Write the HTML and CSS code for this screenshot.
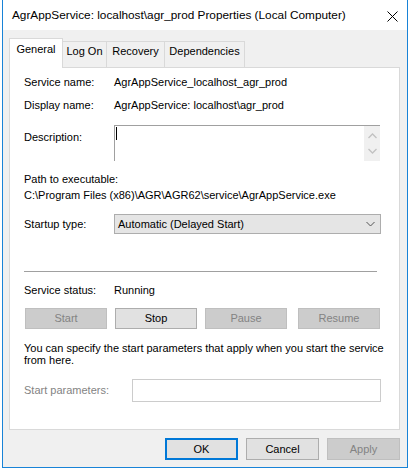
FILE: index.html
```html
<!DOCTYPE html>
<html>
<head>
<meta charset="utf-8">
<link rel="stylesheet" href="styles.css">
</head>
<body>
<div class="window">
  <div class="titlebar">
    <span class="title">AgrAppService: localhost\agr_prod Properties (Local Computer)</span>
    <svg class="close" width="11" height="11" viewBox="0 0 11 11"><path d="M0.5 0.5 L10.5 10.5 M10.5 0.5 L0.5 10.5" stroke="#000" stroke-width="1" fill="none"/></svg>
  </div>
  <div class="client">
    <div class="tabs">
      <div class="tab selected">General</div>
      <div class="tab t-logon">Log On</div>
      <div class="tab t-recovery">Recovery</div>
      <div class="tab t-deps">Dependencies</div>
    </div>
    <div class="panel">
      <div class="row r1"><span class="label">Service name:</span><span>AgrAppService_localhost_agr_prod</span></div>
      <div class="row r2"><span class="label">Display name:</span><span>AgrAppService: localhost\agr_prod</span></div>
      <div class="desc-row">
        <span class="label desc-label">Description:</span>
        <div class="desc-box">
          <div class="caret"></div>
          <div class="scroll">
            <svg width="9" height="6" viewBox="0 0 9 6"><polyline points="0.5,5 4.5,1 8.5,5" stroke="#c2c2c2" stroke-width="1.3" fill="none"/></svg>
            <svg width="9" height="6" viewBox="0 0 9 6"><polyline points="0.5,1 4.5,5 8.5,1" stroke="#c2c2c2" stroke-width="1.3" fill="none"/></svg>
          </div>
        </div>
      </div>
      <div class="path">
        <div>Path to executable:</div>
        <div>C:\Program Files (x86)\AGR\AGR62\service\AgrAppService.exe</div>
      </div>
      <div class="row startup"><span class="label">Startup type:</span>
        <div class="combo"><span>Automatic (Delayed Start)</span>
          <svg width="9" height="6" viewBox="0 0 9 6"><polyline points="0.5,1 4.5,5 8.5,1" stroke="#555" stroke-width="1" fill="none"/></svg>
        </div>
      </div>
      <div class="sep"></div>
      <div class="row status"><span class="label">Service status:</span><span>Running</span></div>
      <div class="btnrow">
        <div class="btn disabled b-start">Start</div>
        <div class="btn b-stop">Stop</div>
        <div class="btn disabled b-pause">Pause</div>
        <div class="btn disabled b-resume">Resume</div>
      </div>
      <div class="info">You can specify the start parameters that apply when you start the service<br>from here.</div>
      <div class="row params"><span class="label plabel">Start parameters:</span><div class="pinput"></div></div>
    </div>
    <div class="footer">
      <div class="btn fbtn ok">OK</div>
      <div class="btn fbtn">Cancel</div>
      <div class="btn fbtn disabled">Apply</div>
    </div>
  </div>
</div>
</body>
</html>
```

FILE: styles.css
```css
html, body {
  margin: 0;
  padding: 0;
  background: #ffffff;
}
body {
  font-family: "Liberation Sans", Arial, sans-serif;
  font-size: 11px;
  color: #000;
  width: 409px;
  height: 470px;
  overflow: hidden;
}
.window {
  margin-left: 2px;
  width: 406px;
  height: 468px;
  box-sizing: border-box;
  border: 1px solid #1883d7;
  border-top: none;
  display: flex;
  flex-direction: column;
}
.titlebar {
  height: 30px;
  flex: none;
  background: #fff;
  display: flex;
  align-items: center;
  padding-left: 9px;
  padding-right: 9px;
}
.title {
  font-size: 11.8px;
  flex: 1;
  white-space: nowrap;
}
.close {
  display: block;
  margin-top: 2px;
}
.client {
  flex: 1;
  background: #f0f0f0;
  padding-left: 6px;
}
.tabs {
  margin-top: 8px;
  height: 29px;
  display: flex;
  align-items: flex-end;
}
.tab {
  box-sizing: border-box;
  height: 26px;
  border: 1px solid #d9d9d9;
  border-bottom: none;
  border-left: none;
  background: #f0f0f0;
  text-align: center;
  line-height: 13px;
  padding-top: 3px;
}
.tab.selected {
  position: relative;
  z-index: 1;
  height: 30px;
  margin-bottom: -1px;
  width: 54px;
  border-left: 1px solid #d9d9d9;
  background: #fff;
  padding-top: 4px;
}
.t-logon { width: 44px; }
.t-recovery { width: 58px; }
.t-deps { width: 80px; }
.panel {
  box-sizing: border-box;
  width: 391px;
  height: 363px;
  border: 1px solid #d9d9d9;
  background: #fff;
  padding-left: 14px;
}
.row {
  display: flex;
  align-items: center;
  height: 13px;
  line-height: 13px;
}
.label {
  width: 90px;
  flex: none;
}
.r1 { margin-top: 8px; }
.r2 { margin-top: 10px; }
.desc-row {
  display: flex;
  align-items: flex-start;
  margin-top: 13px;
  height: 36px;
}
.desc-label {
  margin-top: 6px;
  line-height: 13px;
}
.desc-box {
  box-sizing: border-box;
  width: 266px;
  height: 36px;
  border-top: 1px solid #a0a0a0;
  border-left: 1px solid #a0a0a0;
  display: flex;
  justify-content: space-between;
}
.caret {
  width: 1px;
  height: 13px;
  background: #000;
  margin-left: 1px;
  margin-top: 1px;
}
.scroll {
  width: 16px;
  height: 35px;
  background: #f0f0f0;
  display: flex;
  flex-direction: column;
  align-items: center;
  justify-content: space-around;
  padding: 3px 0;
  box-sizing: border-box;
}
.scroll svg { display: block; }
.path {
  margin-top: 10px;
  line-height: 16px;
}
.startup {
  margin-top: 11px;
  height: 20px;
}
.combo {
  box-sizing: border-box;
  width: 267px;
  height: 20px;
  border: 1px solid #adadad;
  background: #e5e5e5;
  display: flex;
  align-items: center;
  justify-content: space-between;
  padding-left: 3px;
  padding-right: 5px;
}
.combo svg { display: block; }
.sep {
  margin-top: 37px;
  width: 353px;
  height: 1px;
  background: #a0a0a0;
}
.status { margin-top: 12px; }
.btnrow {
  display: flex;
  margin-top: 11px;
  padding-left: 1px;
}
.btn {
  box-sizing: border-box;
  width: 82px;
  height: 21px;
  border: 1px solid #adadad;
  background: #e1e1e1;
  display: flex;
  align-items: center;
  justify-content: center;
  line-height: 13px;
}
.btn.disabled {
  background: #cccccc;
  border-color: #bfbfbf;
  color: #838383;
}
.b-stop { margin-left: 8px; }
.b-pause { margin-left: 8px; }
.b-resume { margin-left: 11px; }
.info {
  margin-top: 13px;
  line-height: 12px;
}
.params {
  margin-top: 13px;
  height: 23px;
}
.plabel {
  width: 108px;
  color: #838383;
}
.pinput {
  box-sizing: border-box;
  width: 249px;
  height: 23px;
  border: 1px solid #cccccc;
  background: #fff;
}
.footer {
  display: flex;
  justify-content: flex-end;
  margin-top: 8px;
  padding-right: 7px;
}
.fbtn {
  width: 73px;
  height: 22px;
  margin-left: 8px;
}
.ok {
  border: 2px solid #0078d7;
}
```
